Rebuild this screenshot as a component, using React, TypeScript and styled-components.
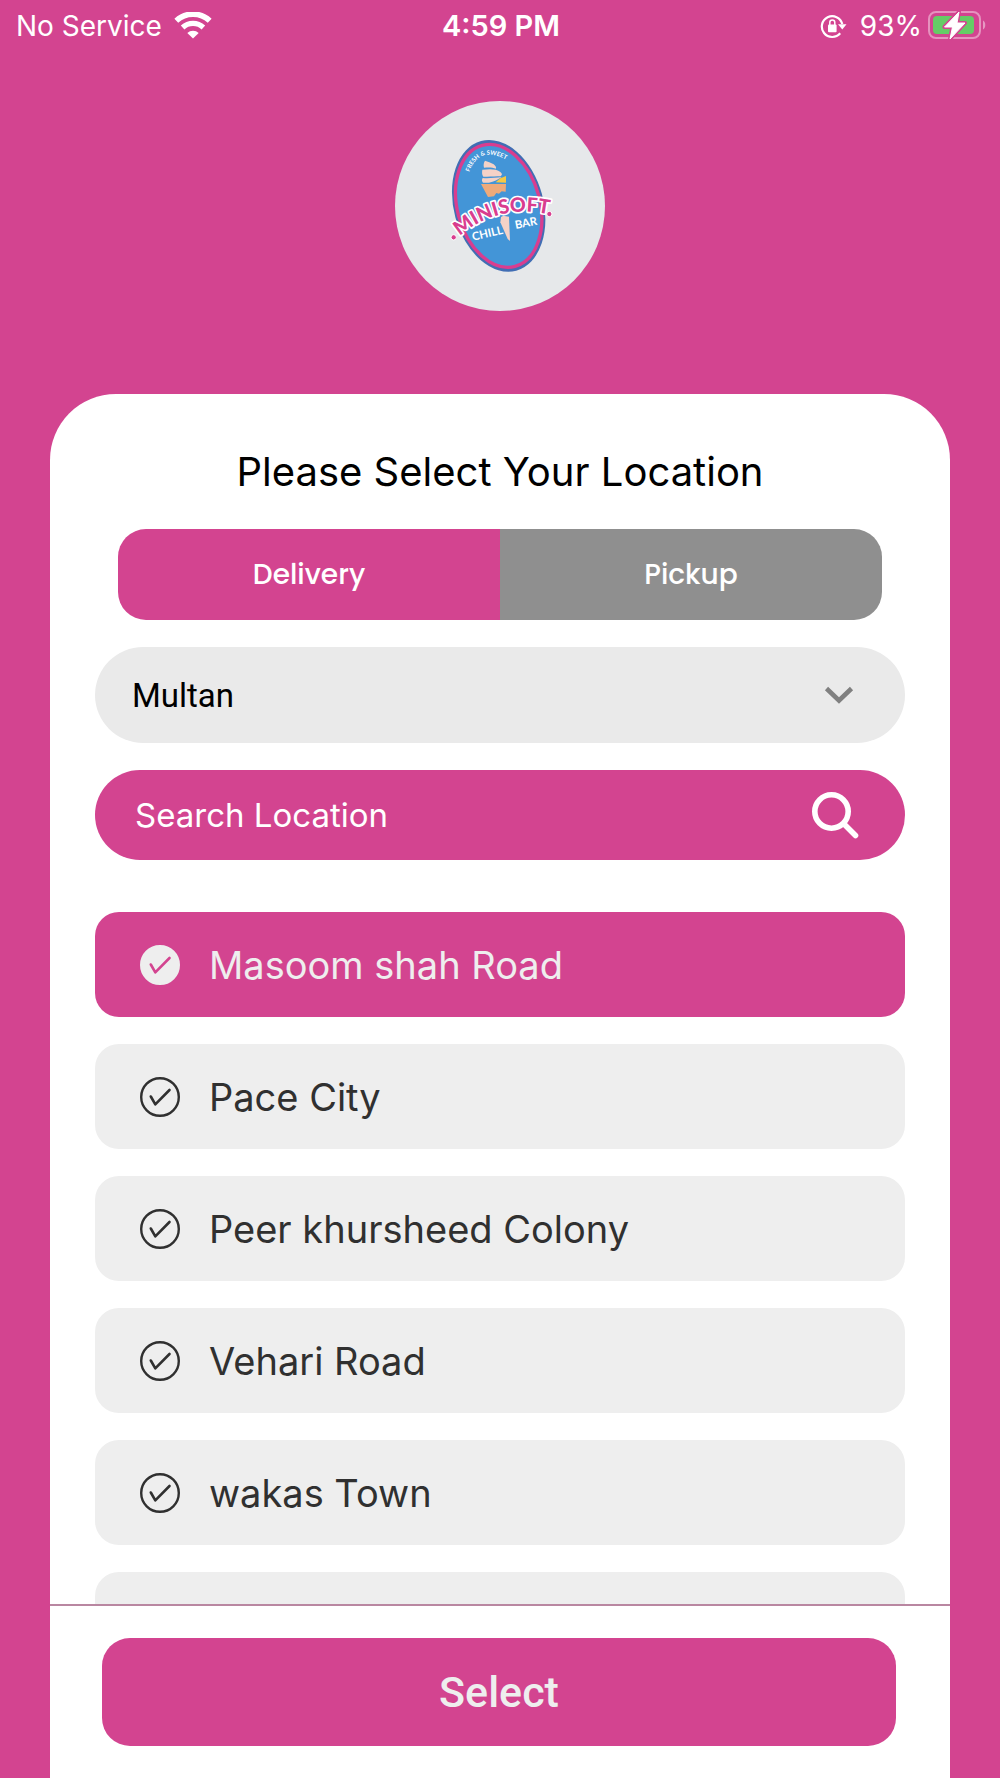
import React, { useState } from "react";
import styled, { createGlobalStyle } from "styled-components";

const pink = "#d34490";

const GlobalStyle = createGlobalStyle`
  *, *::before, *::after { box-sizing: border-box; }
  body {
    margin: 0;
    background: ${pink};
    font-family: Inter, Roboto, "Liberation Sans", sans-serif;
  }
  button, input, select { font-family: inherit; }
`;

const Screen = styled.div`
  display: flex;
  flex-direction: column;
  height: 100vh;
  background: ${pink};
`;

const StatusBar = styled.header`
  display: grid;
  grid-template-columns: 1fr auto 1fr;
  align-items: center;
  flex: none;
  height: 51px;
  padding: 0 14px 0 16px;
  color: #fff;
  font-size: 28px;
  line-height: 32px;
`;

const StatusGroup = styled.div<{ $end?: boolean }>`
  display: flex;
  align-items: center;
  justify-content: ${(p) => (p.$end ? "flex-end" : "flex-start")};
  gap: ${(p) => (p.$end ? "6px" : "12px")};
`;

const Clock = styled.time`
  font-size: 29px;
  font-weight: 600;
`;

const Brand = styled.div`
  display: flex;
  justify-content: center;
  flex: none;
  padding: 50px 0 83px;
`;

const Panel = styled.main`
  display: flex;
  flex-direction: column;
  flex: 1;
  min-height: 0;
  margin: 0 5%;
  background: #fff;
  border-radius: 66px 66px 0 0;
`;

const Title = styled.h1`
  margin: 52px 0 32px;
  color: #000;
  font-size: 40px;
  font-weight: 400;
  line-height: 51px;
  text-align: center;
`;

const Tabs = styled.div`
  display: flex;
  flex: none;
  height: 91px;
  margin: 0 68px;
  border-radius: 28px;
  overflow: hidden;
`;

const Tab = styled.button<{ $active: boolean }>`
  flex: 1;
  padding: 0;
  border: 0;
  background: ${(p) => (p.$active ? pink : "#8f8f8f")};
  color: #fff;
  font-family: Poppins, Inter, sans-serif;
  font-size: 28px;
  font-weight: 500;
`;

const Field = styled.label<{ $tone: "light" | "brand" }>`
  display: flex;
  align-items: center;
  flex: none;
  height: ${(p) => (p.$tone === "light" ? "96px" : "90px")};
  margin: 27px 45px 0;
  padding: 0 46px 0 ${(p) => (p.$tone === "light" ? "37px" : "40px")};
  border-radius: 48px;
  background: ${(p) => (p.$tone === "light" ? "#eaeaea" : pink)};
`;

const City = styled.select`
  flex: 1;
  min-width: 0;
  padding: 0;
  border: 0;
  appearance: none;
  background: transparent;
  color: #000;
  font-family: Roboto, Inter, sans-serif;
  font-size: 33px;
`;

const Search = styled.input`
  flex: 1;
  min-width: 0;
  padding: 0;
  border: 0;
  outline: 0;
  background: transparent;
  color: #fff;
  font-size: 33px;
  &::placeholder { color: #fff; opacity: 1; }
`;

const Locations = styled.div`
  display: flex;
  flex-direction: column;
  gap: 27px;
  flex: 1;
  min-height: 0;
  margin-top: 52px;
  padding: 0 45px;
  overflow: hidden;
`;

const Location = styled.label<{ $active: boolean }>`
  display: flex;
  align-items: center;
  gap: 29px;
  flex: none;
  height: 105px;
  padding: 0 45px;
  border-radius: 24px;
  background: ${(p) => (p.$active ? pink : "#eeeeee")};
  color: ${(p) => (p.$active ? "#eeeeee" : "#303030")};
  font-size: 38px;
  line-height: 48px;
`;

const Radio = styled.input`
  position: absolute;
  opacity: 0;
  pointer-events: none;
`;

const Footer = styled.footer`
  flex: none;
  padding: 32px 54px 32px 52px;
  border-top: 2px solid #b987a1;
  background: #fff;
`;

const SelectButton = styled.button`
  display: block;
  width: 100%;
  height: 108px;
  border: 0;
  border-radius: 28px;
  background: ${pink};
  color: #eeeeee;
  font-family: Roboto, Inter, sans-serif;
  font-size: 43px;
  font-weight: 500;
`;

const WifiIcon = () => (
  <svg width="38" height="28" viewBox="0 0 38 28" fill="none" stroke="#fff" aria-hidden="true">
    <path d="M2.300 8.700a24.500 24.500 0 0 1 33.400 0" strokeWidth="5.600" />
    <path d="M8.600 15.500a15.200 15.200 0 0 1 20.800 0" strokeWidth="5.200" />
    <path d="M13.300 21a8.200 8.200 0 0 1 11.400 0L19 26.500z" fill="#fff" stroke="none" />
  </svg>
);

const RotationLockIcon = () => (
  <svg width="34" height="26" viewBox="0 0 34 26" fill="none" stroke="#fff" strokeWidth="2.200" aria-hidden="true">
    <path d="M20.200 20.300A10.400 10.400 0 1 1 22.300 11" />
    <path d="M18 11.200h8.500L22.300 16.600z" fill="#fff" stroke="none" />
    <rect x="8" y="11.500" width="8.600" height="7.800" rx="1" fill="#fff" stroke="none" />
    <path d="M9.800 12V9.500a2.500 2.500 0 0 1 5 0V12" strokeWidth="1.500" />
  </svg>
);

const BatteryIcon = () => (
  <svg width="58" height="30" viewBox="0 0 58 30" aria-hidden="true">
    <rect x="1" y="1" width="51" height="26" rx="7" fill="none" stroke="#fff" strokeOpacity=".42" strokeWidth="2" />
    <path d="M55 9.500c3 1.300 3 7.700 0 9z" fill="#fff" fillOpacity=".45" />
    <rect x="5" y="5" width="41" height="18" rx="4" fill="#65cc66" />
    <path d="M31 1 16.500 16h8L22 28 37 12h-8z" fill="#fff" stroke={pink} strokeWidth="4" strokeLinejoin="round" />
    <path d="M31 1 16.500 16h8L22 28 37 12h-8z" fill="#fff" stroke="#fff" strokeLinejoin="round" />
  </svg>
);

const ChevronIcon = () => (
  <svg width="40" height="20" viewBox="0 0 40 20" fill="none" stroke="#808080" strokeWidth="4.600" aria-hidden="true">
    <path d="M7.500 3.500 20 15.500 32.500 3.500" />
  </svg>
);

const SearchIcon = () => (
  <svg width="48" height="48" viewBox="0 0 48 48" fill="none" stroke="#fff" aria-hidden="true">
    <circle cx="20.500" cy="20.500" r="16.700" strokeWidth="5.600" />
    <path d="M33 33 44.500 44.500" strokeWidth="5.600" strokeLinecap="round" />
  </svg>
);

const CheckIcon = ({ active }: { active: boolean }) => (
  <svg width="40" height="40" viewBox="0 0 40 40" fill="none" aria-hidden="true">
    <circle cx="20" cy="20" r="18.800" fill={active ? "#eee" : "none"} stroke={active ? "#eee" : "#303030"} strokeWidth="2.400" />
    <path
      d="M10.800 19.500 15.300 27.300 29.500 13"
      stroke={active ? pink : "#303030"}
      strokeWidth="2.600"
      strokeLinecap="round"
      strokeLinejoin="round"
    />
  </svg>
);

const Logo = () => (
  <svg width="210" height="210" viewBox="45 31 630 630" role="img" aria-label="Minisoft Chill Bar">
    <defs>
      <path id="tagline" d="M268 244Q299 160 386 211" />
      <path id="wordmark" d="M239 437Q360 332 530 376" />
    </defs>
    <circle cx="360" cy="346" r="315" fill="#e6e8ea" />
    <g transform="rotate(-15.200 356 345.500)">
      <ellipse cx="356" cy="345.500" rx="134.500" ry="201.500" fill="#416eb4" />
      <ellipse cx="356" cy="345.500" rx="124" ry="188" fill="#4395d7" stroke="#d93d8f" strokeWidth="10" />
    </g>
    <g fill="#f4d2c7">
      <path d="M315 210c8 3 18 5 26 11 6 5 8 9 7 13-12-5-25-4-36-3-2-7-1-16 3-21z" />
      <path d="M307 237c18-2 42-4 54 7 7 6 5 9 1 13-16 0-34 2-52 1-5-7-4-15-3-21z" />
      <path d="M308 262c18 2 37-1 57-3-10 7-24 15-38 17h-18c-4-4-4-9-1-14z" />
      <path d="m363 379 7-4 17 3 3 73-7-6-22-50z" />
    </g>
    <path d="m347 275 14-12 17-7v20z" fill="#f5c945" />
    <path d="M303 280h75l-1 23-12-1-8 7-8-2-7 10-18 2z" fill="#eeaa7a" />
    <text fontFamily="Lato, sans-serif" fontSize="18" fontWeight="700" fill="#fff">
      <textPath href="#tagline">FRESH &amp; SWEET</textPath>
    </text>
    <g fill="#fff" fontFamily="Lato, sans-serif" fontWeight="700">
      <text fontSize="34" transform="translate(279 450) rotate(-13)">CHILL</text>
      <text fontSize="34" transform="translate(407 415) rotate(-11)">BAR</text>
    </g>
    <text
      fontFamily="Lato, sans-serif"
      fontSize="59"
      fontWeight="900"
      fill="#d93d8f"
      stroke="#fff"
      strokeWidth="10"
      strokeLinejoin="round"
      paintOrder="stroke"
    >
      <textPath href="#wordmark">MINISOFT</textPath>
    </text>
    <g fill="#d93d8f" stroke="#fff" strokeWidth="3">
      <circle cx="221" cy="440" r="8" />
      <circle cx="508" cy="370" r="8" />
    </g>
  </svg>
);

const modes = ["Delivery", "Pickup"];
const locations = ["Masoom shah Road", "Pace City", "Peer khursheed Colony", "Vehari Road", "wakas Town", ""];

export default function App() {
  const [mode, setMode] = useState(modes[0]);
  const [selected, setSelected] = useState(0);

  return (
    <>
      <GlobalStyle />
      <Screen>
        <StatusBar>
          <StatusGroup>
            <span>No Service</span>
            <WifiIcon />
          </StatusGroup>
          <Clock>4:59 PM</Clock>
          <StatusGroup $end>
            <RotationLockIcon />
            <span>93%</span>
            <BatteryIcon />
          </StatusGroup>
        </StatusBar>
        <Brand>
          <Logo />
        </Brand>
        <Panel>
          <Title>Please Select Your Location</Title>
          <Tabs>
            {modes.map((name) => (
              <Tab key={name} type="button" $active={mode === name} aria-pressed={mode === name} onClick={() => setMode(name)}>
                {name}
              </Tab>
            ))}
          </Tabs>
          <Field $tone="light">
            <City aria-label="City" defaultValue="Multan">
              <option>Multan</option>
            </City>
            <ChevronIcon />
          </Field>
          <Field $tone="brand">
            <Search type="text" aria-label="Search Location" placeholder="Search Location" />
            <SearchIcon />
          </Field>
          <Locations role="radiogroup" aria-label="Location">
            {locations.map((name, i) => (
              <Location key={i} $active={i === selected}>
                <Radio type="radio" name="location" checked={i === selected} onChange={() => setSelected(i)} />
                <CheckIcon active={i === selected} />
                <span>{name}</span>
              </Location>
            ))}
          </Locations>
          <Footer>
            <SelectButton type="button">Select</SelectButton>
          </Footer>
        </Panel>
      </Screen>
    </>
  );
}
